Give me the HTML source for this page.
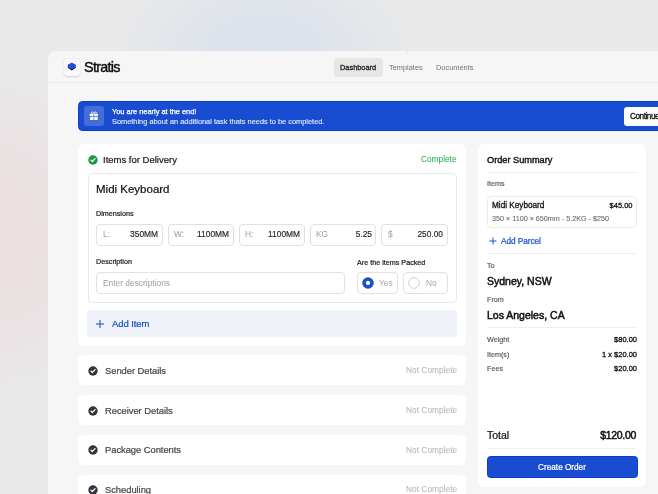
<!DOCTYPE html>
<html><head><meta charset="utf-8">
<style>
*{margin:0;padding:0;box-sizing:border-box}
html,body{width:658px;height:494px;overflow:hidden}
body{position:relative;background:#e9e9e9;font-family:"Liberation Sans",sans-serif;color:#1a1a1a}
.a{position:absolute;white-space:nowrap;line-height:1;will-change:transform}
.b{font-weight:bold}
.sb{-webkit-text-stroke:0.3px currentColor}
.m{-webkit-text-stroke:0.22px currentColor}
.bg1{position:absolute;left:112px;top:-45px;width:305px;height:190px;border-radius:50%;background:radial-gradient(closest-side,#dce2ec 0%,rgba(220,226,236,.75) 45%,rgba(233,233,233,0) 100%)}
.bg2{position:absolute;left:-110px;top:70px;width:230px;height:330px;border-radius:50%;background:radial-gradient(closest-side,#eadfe1 0%,rgba(234,223,225,.8) 50%,rgba(233,233,233,0) 100%)}
.frame{position:absolute;left:48px;top:50.7px;width:640px;height:480px;background:#f6f6f6;border-radius:8px 0 0 0}
.hdiv{position:absolute;left:48px;top:82px;width:620px;height:1px;background:#ebebeb}
.logo{position:absolute;left:63.5px;top:59px;width:16.5px;height:16.5px;border-radius:3.5px;background:#fafafa;box-shadow:0 0.6px 1.6px rgba(0,0,0,.16)}
.tab{position:absolute;left:334px;top:57.5px;width:49px;height:19px;border-radius:3.5px;background:#e6e6e6}
.banner{position:absolute;left:78px;top:101px;width:600px;height:30px;border-radius:4.5px;background:#184dd1;border:1px solid #0b3ccb}
.gift{position:absolute;left:84px;top:106px;width:20px;height:20px;border-radius:3px;background:rgba(255,255,255,.19)}
.cont{position:absolute;left:624px;top:107px;width:60px;height:18.5px;border-radius:3px;background:#fff}
.card{position:absolute;background:#fff;border-radius:6px}
.box{position:absolute;border:1px solid #e8e8e8;border-radius:4px;background:#fff}
.fld{position:absolute;top:223.5px;width:66.4px;height:22px;border:1px solid #e1e1e1;border-radius:4px;background:#fff}
.fl{position:absolute;will-change:transform;font-size:8.4px;color:#9c9c9c;line-height:1;top:230px}
.fv{position:absolute;will-change:transform;-webkit-text-stroke:0.15px #222;font-size:8.4px;color:#222;line-height:1;text-align:right;top:230px;white-space:nowrap}
.div{position:absolute;height:1px;background:#efefef}
.lab{font-size:7.2px;color:#555;-webkit-text-stroke:0.15px currentColor}
.val{font-size:7.5px;-webkit-text-stroke:0.3px currentColor;color:#111;text-align:right}
</style></head><body>
<div class="bg1"></div>
<div class="bg2"></div>
<div class="frame"></div>
<div class="hdiv"></div>
<svg class="a" style="left:403px;top:50px" width="10" height="8" viewBox="403 50 10 8"><path d="M405.3 50.6 L410.8 50.6 Q407.2 51.6 406.4 55.6 Q406.1 52 405.3 50.6 Z" fill="#ebebeb"/></svg>
<div class="logo"></div>
<svg class="a" style="left:66px;top:61px" width="12" height="12" viewBox="0 0 12 12">
  <path d="M1.8 5.5 L5.8 8 L9.8 5.5 L9.8 6.8 L5.8 9.4 L1.8 6.8 Z" fill="#0a0a1e"/>
  <path d="M5.8 1.5 L9.8 3.85 L9.8 5.9 L5.8 8.35 L1.8 5.9 L1.8 3.85 Z" fill="#1c4fe0"/>
</svg>
<div class="a" style="left:84px;top:59.9px;font-size:14.4px;letter-spacing:-0.72px;-webkit-text-stroke:0.4px #0d0d0d;color:#0d0d0d">Stratis</div>

<div class="tab"></div>
<div class="a sb" style="left:340.2px;top:63.5px;font-size:7.4px;color:#1e1e1e">Dashboard</div>
<div class="a" style="left:389.3px;top:63.5px;font-size:7.4px;color:#737373">Templates</div>
<div class="a" style="left:435.6px;top:63.5px;font-size:7.4px;color:#737373">Documents</div>

<div class="banner"></div>
<div class="gift"></div>
<svg class="a" style="left:84px;top:106px" width="20" height="20" viewBox="0 0 20 20">
  <rect x="5.8" y="7.7" width="8.2" height="2.3" rx="0.5" fill="#fff"/>
  <rect x="6.1" y="10.8" width="7.6" height="3.3" rx="0.5" fill="#fff"/>
  <path d="M9.9 7.6 C9.2 5.4 7 5.5 7.5 7.4 M9.9 7.6 C10.6 5.4 12.8 5.5 12.3 7.4" stroke="#fff" stroke-width="1" fill="none"/>
  <rect x="9.55" y="7.7" width="0.7" height="6.4" fill="#4a72dc"/>
</svg>
<div class="a sb" style="-webkit-text-stroke:0.25px currentColor;left:112.3px;top:108.3px;font-size:7.4px;color:#fff">You are nearly at the end!</div>
<div class="a" style="left:111.8px;top:117.6px;font-size:7.4px;-webkit-text-stroke:0.12px currentColor;color:#e3e9fb">Something about an additional task thats needs to be completed.</div>
<div class="cont"></div>
<div class="a" style="left:629.9px;top:113.3px;font-size:8.2px;letter-spacing:-0.45px;-webkit-text-stroke:0.3px #111;color:#111">Continue</div>

<!-- Items card -->
<div class="card" style="left:78px;top:144px;width:388px;height:202px"></div>
<svg class="a" style="left:87.5px;top:154.5px" width="10" height="10" viewBox="0 0 10 10">
  <circle cx="5" cy="5" r="4.7" fill="#169a3e"/>
  <path d="M2.9 5.1 L4.3 6.5 L7.1 3.6" stroke="#fff" stroke-width="1.2" fill="none" stroke-linecap="round" stroke-linejoin="round"/>
</svg>
<div class="a m" style="left:103px;top:154.9px;font-size:9.5px;color:#1a1a1a">Items for Delivery</div>
<div class="a" style="left:420.9px;top:154.9px;font-size:8.3px;color:#1dab48">Complete</div>

<div class="box" style="left:87.5px;top:172.5px;width:369px;height:130.5px"></div>
<div class="a m" style="left:96.2px;top:183.5px;font-size:11.5px;color:#111">Midi Keyboard</div>
<div class="a m" style="left:96.1px;top:210px;font-size:7.2px;color:#222">Dimensions</div>

<div class="fld" style="left:96.4px"></div>
<div class="fld" style="left:167.6px"></div>
<div class="fld" style="left:238.9px"></div>
<div class="fld" style="left:310.1px"></div>
<div class="fld" style="left:381.4px"></div>
<div class="fl" style="left:103px">L:</div>
<div class="fv" style="left:110px;width:48px">350MM</div>
<div class="fl" style="left:174px">W:</div>
<div class="fv" style="left:181px;width:48px">1100MM</div>
<div class="fl" style="left:245px">H:</div>
<div class="fv" style="left:252px;width:48px">1100MM</div>
<div class="fl" style="left:316px">KG</div>
<div class="fv" style="left:323px;width:49px">5.25</div>
<div class="fl" style="left:388px">$</div>
<div class="fv" style="left:395px;width:48px">250.00</div>

<div class="a m" style="left:95.9px;top:258.2px;font-size:7.2px;color:#222">Description</div>
<div class="fld" style="left:96px;top:271.7px;width:249px;height:22.5px"></div>
<div class="a" style="left:102.8px;top:278.5px;font-size:8.4px;color:#9c9c9c">Enter descriptions</div>

<div class="a m" style="left:356.9px;top:258.5px;font-size:7.2px;color:#222">Are the items Packed</div>
<div class="fld" style="left:356.6px;top:271.7px;width:41.4px;height:22.5px"></div>
<div class="fld" style="left:402.9px;top:271.7px;width:44.8px;height:22.5px"></div>
<svg class="a" style="left:361.7px;top:277.1px" width="12" height="12" viewBox="0 0 12 12"><circle cx="6" cy="6" r="3.95" fill="none" stroke="#1a4fd0" stroke-width="3.6"/></svg>
<div class="a" style="left:379.4px;top:278.6px;font-size:8.4px;color:#a8a8a8">Yes</div>
<svg class="a" style="left:407.9px;top:277.1px" width="12" height="12" viewBox="0 0 12 12"><circle cx="6" cy="6" r="5.3" fill="none" stroke="#c9c9c9" stroke-width="0.9"/></svg>
<div class="a" style="left:426px;top:278.6px;font-size:8.4px;color:#a8a8a8">No</div>

<div class="a" style="left:87px;top:310px;width:370px;height:26.5px;border-radius:4px;background:#eff2f8"></div>
<svg class="a" style="left:95.3px;top:318.6px" width="10" height="10" viewBox="0 0 10 10"><path d="M5 1 V9 M1 5 H9" stroke="#1a4fd0" stroke-width="1.05"/></svg>
<div class="a m" style="left:112.1px;top:318.8px;font-size:9.5px;letter-spacing:-0.08px;color:#1a4fd0">Add Item</div>

<!-- collapsed cards -->
<div class="card" style="left:78px;top:355.3px;width:388px;height:30.2px"></div>
<div class="card" style="left:78px;top:395.1px;width:388px;height:30.2px"></div>
<div class="card" style="left:78px;top:434.9px;width:388px;height:30.2px"></div>
<div class="card" style="left:78px;top:474.7px;width:388px;height:30.2px"></div>

<svg class="a" style="left:87.5px;top:365.7px" width="10" height="10" viewBox="0 0 10 10"><circle cx="5" cy="5" r="4.7" fill="#34343c"/><path d="M2.9 5.1 L4.3 6.5 L7.1 3.6" stroke="#fff" stroke-width="1.2" fill="none" stroke-linecap="round" stroke-linejoin="round"/></svg>
<div class="a m" style="left:105px;top:365.8px;font-size:9.4px;letter-spacing:-0.04px;color:#46464c">Sender Details</div>
<div class="a" style="left:405.6px;top:366px;font-size:8.4px;color:#b2b2b2">Not Complete</div>

<svg class="a" style="left:87.5px;top:405.5px" width="10" height="10" viewBox="0 0 10 10"><circle cx="5" cy="5" r="4.7" fill="#34343c"/><path d="M2.9 5.1 L4.3 6.5 L7.1 3.6" stroke="#fff" stroke-width="1.2" fill="none" stroke-linecap="round" stroke-linejoin="round"/></svg>
<div class="a m" style="left:105px;top:405.6px;font-size:9.4px;letter-spacing:-0.04px;color:#46464c">Receiver Details</div>
<div class="a" style="left:405.6px;top:405.8px;font-size:8.4px;color:#b2b2b2">Not Complete</div>

<svg class="a" style="left:87.5px;top:445.3px" width="10" height="10" viewBox="0 0 10 10"><circle cx="5" cy="5" r="4.7" fill="#34343c"/><path d="M2.9 5.1 L4.3 6.5 L7.1 3.6" stroke="#fff" stroke-width="1.2" fill="none" stroke-linecap="round" stroke-linejoin="round"/></svg>
<div class="a m" style="left:105px;top:445.4px;font-size:9.4px;letter-spacing:-0.04px;color:#46464c">Package Contents</div>
<div class="a" style="left:405.6px;top:445.6px;font-size:8.4px;color:#b2b2b2">Not Complete</div>

<svg class="a" style="left:87.5px;top:485.1px" width="10" height="10" viewBox="0 0 10 10"><circle cx="5" cy="5" r="4.7" fill="#34343c"/><path d="M2.9 5.1 L4.3 6.5 L7.1 3.6" stroke="#fff" stroke-width="1.2" fill="none" stroke-linecap="round" stroke-linejoin="round"/></svg>
<div class="a m" style="left:105px;top:485.2px;font-size:9.4px;letter-spacing:-0.04px;color:#46464c">Scheduling</div>
<div class="a" style="left:405.6px;top:485.4px;font-size:8.4px;color:#b2b2b2">Not Complete</div>

<!-- Order summary -->
<div class="card" style="left:478px;top:144px;width:168px;height:343px"></div>
<div class="a sb" style="-webkit-text-stroke:0.4px currentColor;left:487px;top:155.5px;font-size:9.2px;color:#111">Order Summary</div>
<div class="div" style="left:487px;top:171.5px;width:150px"></div>
<div class="a lab" style="left:487px;top:180.3px">Items</div>
<div class="box" style="left:487px;top:196.3px;width:150px;height:32.1px;border-color:#ececec"></div>
<div class="a m" style="left:491.9px;top:202.3px;font-size:8.2px;-webkit-text-stroke:0.3px currentColor;color:#111">Midi Keyboard</div>
<div class="a val" style="left:580px;top:201.5px;width:52.5px">$45.00</div>
<div class="a" style="left:491.9px;top:214.9px;font-size:7.2px;-webkit-text-stroke:0.1px currentColor;color:#6a6a6a">350 × 1100 × 650mm - 5.2KG - $250</div>
<svg class="a" style="left:488.6px;top:237.4px" width="8" height="8" viewBox="0 0 8 8"><path d="M4 0.5 V7.5 M0.5 4 H7.5" stroke="#1a4fd0" stroke-width="1"/></svg>
<div class="a m" style="left:500.7px;top:236.5px;font-size:8.3px;letter-spacing:-0.08px;color:#1a4fd0">Add Parcel</div>
<div class="div" style="left:487px;top:253px;width:150px"></div>
<div class="a lab" style="left:487.3px;top:261.7px">To</div>
<div class="a sb" style="-webkit-text-stroke:0.5px currentColor;left:487px;top:275.6px;font-size:10.5px;color:#111">Sydney, NSW</div>
<div class="a lab" style="left:487px;top:295.6px">From</div>
<div class="a sb" style="-webkit-text-stroke:0.5px currentColor;left:487px;top:309.8px;font-size:10.5px;color:#111">Los Angeles, CA</div>
<div class="div" style="left:487px;top:327px;width:150px"></div>
<div class="a lab" style="left:487px;top:336px">Weight</div>
<div class="a val" style="left:570px;top:335.9px;width:67px">$80.00</div>
<div class="a lab" style="left:487px;top:350.6px">Item(s)</div>
<div class="a val" style="left:570px;top:350.5px;width:67px">1 x $20.00</div>
<div class="a lab" style="left:487px;top:365.4px">Fees</div>
<div class="a val" style="left:570px;top:365.3px;width:67px">$20.00</div>
<div class="a m" style="left:487.4px;top:430.1px;font-size:10.5px;color:#111">Total</div>
<div class="a sb" style="-webkit-text-stroke:0.5px currentColor;left:550px;top:430.1px;width:86px;text-align:right;font-size:10.5px;letter-spacing:-0.32px;color:#111">$120.00</div>
<div class="div" style="left:487px;top:448px;width:150px"></div>
<div class="a" style="left:486.8px;top:456px;width:150.6px;height:21.8px;border-radius:3.5px;background:#184dd1;border:1px solid #0b3ccb"></div>
<div class="a m" style="left:487px;top:464px;width:150px;text-align:center;font-size:8.2px;color:#fff">Create Order</div>
</body></html>
